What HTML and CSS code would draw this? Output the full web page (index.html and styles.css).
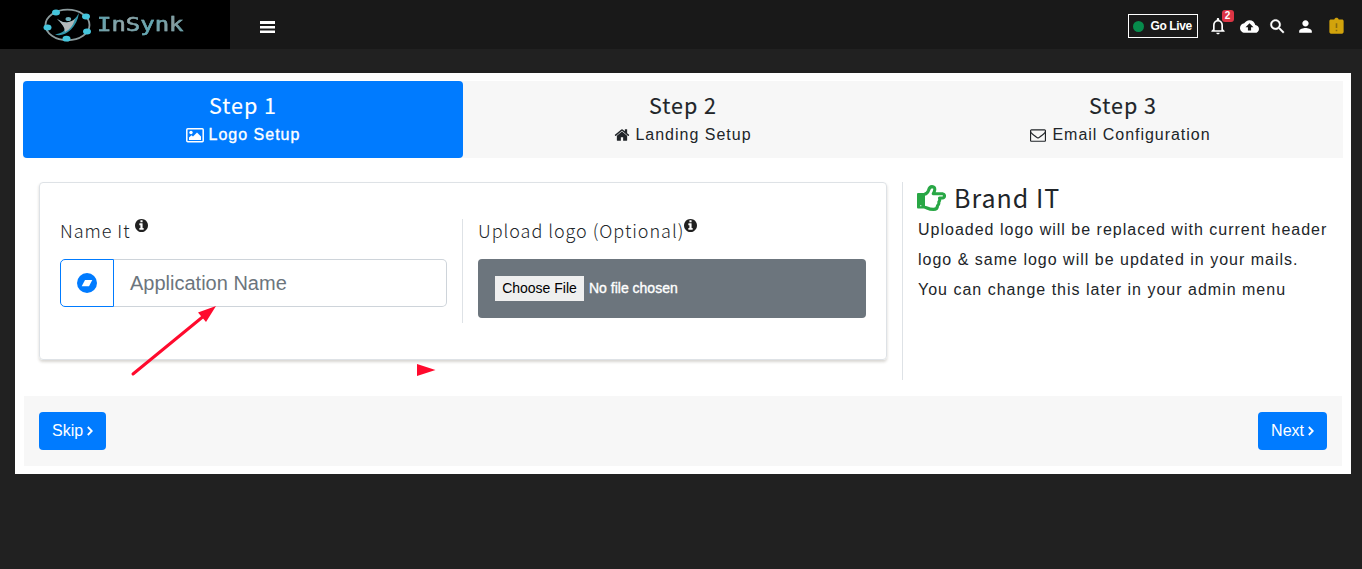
FILE: index.html
```html
<!DOCTYPE html>
<html lang="en">
<head>
<meta charset="utf-8">
<title>InSynk</title>
<link rel="stylesheet" href="styles.css">
</head>
<body>
<header class="topbar">
  <div class="brand">
    <svg class="brand-mark" width="50" height="36" viewBox="0 0 50 36">
      <ellipse cx="24.500" cy="18" rx="22" ry="15.300" fill="none" stroke="#8b9a9c" stroke-width="1.800"/>
      <path d="M14 11.500Q19 16 24 15.500Q31 15 36 6Q34.500 16 28 22.500Q20 30 12 27.500Q21 26 22 21.500Q19 16 14 11.500Z" fill="#3397aa"/>
      <path d="M14 12Q19 15.500 24 15.500Q29 15 32 12Q29 22 22 25Q22 19 14 12Z" fill="#b4b9ba"/>
      <ellipse cx="25.300" cy="12" rx="2.800" ry="2.100" fill="#68aeba"/>
      <g fill="#45c5dc"><ellipse cx="13" cy="5.500" rx="4" ry="2.900"/><ellipse cx="43" cy="9.500" rx="4" ry="3"/><ellipse cx="4.500" cy="20.500" rx="4" ry="2.900"/><ellipse cx="44" cy="24.500" rx="4" ry="2.900"/><ellipse cx="23.500" cy="31.700" rx="4" ry="2.900"/></g>
    </svg>
    <span class="brand-name">InSynk</span>
  </div>
  <svg class="burger" width="15" height="13" viewBox="0 0 15 13"><path d="M0 0h15v3H0zM0 5h15v2.500H0zM0 9.500h15v2.500H0z" fill="#fff"/></svg>
  <div class="tools">
    <div class="live"><i class="dot"></i>Go Live</div>
    <div class="bell">
      <svg width="20" height="20" viewBox="0 0 24 24" fill="#fff"><path d="M12 22c1.100 0 2-.9 2-2h-4c0 1.100.89 2 2 2zm6-6v-5c0-3.070-1.640-5.640-4.500-6.320V4c0-.83-.67-1.500-1.500-1.500s-1.500.67-1.500 1.500v.68C7.630 5.360 6 7.920 6 11v5l-2 2v1h16v-1l-2-2zm-2 1H8v-6c0-2.480 1.510-4.500 4-4.500s4 2.020 4 4.500v6z"/></svg>
      <b class="badge">2</b>
    </div>
    <svg class="cloud" width="19" height="19" viewBox="0 0 24 24" fill="#fff"><path d="M19.350 10.040C18.670 6.590 15.640 4 12 4 9.110 4 6.600 5.640 5.350 8.040 2.340 8.360 0 10.910 0 14c0 3.310 2.690 6 6 6h13c2.760 0 5-2.240 5-5 0-2.640-2.050-4.780-4.650-4.960zM14 13v4h-4v-4H7l5-5 5 5h-3z"/></svg>
    <svg class="search" width="19" height="19" viewBox="0 0 24 24" fill="#fff" stroke="#fff" stroke-width=".5"><path d="M15.500 14h-.79l-.28-.27C15.410 12.590 16 11.110 16 9.500 16 5.910 13.090 3 9.500 3S3 5.910 3 9.500 5.910 16 9.500 16c1.610 0 3.090-.59 4.230-1.570l.27.28v.79l5 4.990L20.490 19l-4.990-5zm-6 0C7.010 14 5 11.990 5 9.500S7.010 5 9.500 5 14 7.010 14 9.500 11.990 14 9.500 14z"/></svg>
    <svg class="person" width="19" height="19" viewBox="0 0 24 24" fill="#fff"><path d="M12 12c2.210 0 4-1.790 4-4s-1.790-4-4-4-4 1.790-4 4 1.790 4 4 4zm0 2c-2.670 0-8 1.340-8 4v2h16v-2c0-2.660-5.330-4-8-4z"/></svg>
    <svg class="clip" width="19" height="19" viewBox="0 0 24 24" fill="#d2a30b"><path d="M10 7h4v12h-4z" fill="#8a6c10"/><path d="M19 3h-4.180C14.400 1.840 13.300 1 12 1c-1.300 0-2.400.84-2.820 2H5c-1.100 0-2 .9-2 2v14c0 1.100.9 2 2 2h14c1.100 0 2-.9 2-2V5c0-1.100-.9-2-2-2zm-6 15h-2v-2h2v2zm0-4h-2V8h2v6z"/></svg>
  </div>
</header>

<main class="wizard">
  <nav class="steps">
    <div class="step active">
      <h2>Step 1</h2>
      <p><svg width="18" height="15" viewBox="0 0 18 15"><rect x=".8" y=".8" width="16.400" height="12.900" rx="1" fill="none" stroke="#fff" stroke-width="1.500"/><circle cx="5" cy="4.500" r="1.700" fill="#fff"/><path d="M3 12V9.500L5.500 7.200 7 8.500 11 4.500 15 8.500V12Z" fill="#fff"/></svg>Logo Setup</p>
    </div>
    <div class="step">
      <h2>Step 2</h2>
      <p><svg width="16" height="16" viewBox="0 0 1792 1792" fill="#212529"><path d="M1472 992v480q0 26-19 45t-45 19h-384v-384h-256v384h-384q-26 0-45-19t-19-45v-480q0-1 .5-3t.5-3l575-474 575 474q1 2 1 6zm223-69l-62 74q-8 9-21 11h-3q-13 0-21-7l-692-577-692 577q-12 8-24 7-13-2-21-11l-62-74q-8-10-7-23.500t11-21.500l719-599q32-26 76-26t76 26l244 204v-195q0-14 9-23t23-9h192q14 0 23 9t9 23v408l219 182q10 8 11 21.500t-7 23.500z"/></svg>Landing Setup</p>
    </div>
    <div class="step email-step">
      <h2>Step 3</h2>
      <p><svg width="16" height="16" viewBox="0 0 1792 1792" fill="#212529"><path d="M1664 1504v-768q-32 36-69 66-268 206-426 338-51 43-83 67t-86.500 48.500-102.500 24.500h-2q-48 0-102.500-24.500t-86.500-48.500-83-67q-158-132-426-338-37-30-69-66v768q0 13 9.500 22.500t22.500 9.500h1472q13 0 22.500-9.500t9.500-22.500zm0-1051v-24.500l-.5-13-3-12.500-5.500-9-9-7.500-14-2.500h-1472q-13 0-22.500 9.500t-9.500 22.500q0 168 147 284 193 152 401 317 6 5 35 29.500t46 37.500 44.500 31.500 50.500 27.500 43 9h2q20 0 43-9t50.500-27.500 44.500-31.500 46-37.500 35-29.500q208-165 401-317 54-43 100.500-115.500t46.500-131.500zm128-37v1088q0 66-47 113t-113 47h-1472q-66 0-113-47t-47-113v-1088q0-66 47-113t113-47h1472q66 0 113 47t47 113z"/></svg>Email Configuration</p>
    </div>
  </nav>

  <div class="content">
    <section class="card">
      <div class="field name-field">
        <label>Name It <svg class="info" width="13" height="13" viewBox="128 128 1536 1536"><path d="M1152 1376v-160q0-14-9-23t-23-9h-96v-512q0-14-9-23t-23-9h-320q-14 0-23 9t-9 23v160q0 14 9 23t23 9h96v320h-96q-14 0-23 9t-9 23v160q0 14 9 23t23 9h448q14 0 23-9t9-23zm-128-896v-160q0-14-9-23t-23-9h-192q-14 0-23 9t-9 23v160q0 14 9 23t23 9h192q14 0 23-9t9-23zm640 416q0 209-103 385.500t-279.500 279.500-385.500 103-385.500-103-279.500-279.500-103-385.500 103-385.500 279.500-279.500 385.500-103 385.500 103 279.500 279.500 103 385.500z"/></svg></label>
        <div class="input-group">
          <span class="addon"><svg width="20" height="20" viewBox="0 0 20 20"><circle cx="10" cy="10" r="10" fill="#007bff"/><path d="M8 7h7.300L12 13.200H4.700Z" fill="#fff"/></svg></span>
          <div class="input">Application Name</div>
        </div>
      </div>
      <div class="field upload-field">
        <label>Upload logo (Optional)<svg class="info" width="13" height="13" viewBox="128 128 1536 1536"><path d="M1152 1376v-160q0-14-9-23t-23-9h-96v-512q0-14-9-23t-23-9h-320q-14 0-23 9t-9 23v160q0 14 9 23t23 9h96v320h-96q-14 0-23 9t-9 23v160q0 14 9 23t23 9h448q14 0 23-9t9-23zm-128-896v-160q0-14-9-23t-23-9h-192q-14 0-23 9t-9 23v160q0 14 9 23t23 9h192q14 0 23-9t9-23zm640 416q0 209-103 385.500t-279.500 279.500-385.500 103-385.500-103-279.500-279.500-103-385.500 103-385.500 279.500-279.500 385.500-103 385.500 103 279.500 279.500 103 385.500z"/></svg></label>
        <div class="upload"><span class="choose">Choose File</span><span class="nofile">No file chosen</span></div>
      </div>
    </section>
    <aside class="help">
      <h1><svg width="29" height="26" viewBox="0 0 29 26"><path d="M1 8h7v15.500H1Q0 23.500 0 22.500V9Q0 8 1 8Z" fill="#28a745"/><path d="M7.500 9.300Q10.500 8.500 11.500 5.500Q12.500 1.600 15 1.600Q18.200 1.700 17.700 5Q17.400 7 16.300 8.700H25.500Q27.500 9 27.500 10.800Q27.500 12.800 25.500 13H22.500Q23.300 15.200 21.800 17Q22.300 19.300 20.500 20.700Q20.500 24.400 16.500 24.400Q13 24.400 10 23Q8.500 22.300 7.500 22.300" fill="none" stroke="#28a745" stroke-width="3.100" stroke-linejoin="round"/><circle cx="3.800" cy="20.700" r=".6" fill="#fff"/></svg><span>Brand IT</span></h1>
      <p>Uploaded logo will be replaced with current header<br>logo &amp; same logo will be updated in your mails.<br>You can change this later in your admin menu</p>
    </aside>
  </div>

  <footer class="actions">
    <div class="btn">Skip <svg width="6" height="10" viewBox="0 0 6 10"><path d="M.8 1L4.800 5 .8 9" fill="none" stroke="#fff" stroke-width="1.800"/></svg></div>
    <div class="btn">Next <svg width="6" height="10" viewBox="0 0 6 10"><path d="M.8 1L4.800 5 .8 9" fill="none" stroke="#fff" stroke-width="1.800"/></svg></div>
  </footer>
</main>

<svg class="annotations" width="1362" height="569" viewBox="0 0 1362 569">
  <path d="M133 374L205 315" stroke="#ff0a2d" stroke-width="3" stroke-linecap="round"/>
  <path d="M216 306L198 312.500 206 322ZM417 364L435.500 370 417 376Z" fill="#ff0a2d"/>
</svg>
</body>
</html>
```
FILE: styles.css
```css
* { box-sizing: border-box; }
body { margin: 0; min-height: 569px; background: #212121; color: #212529; font: 16px/24px "Liberation Sans", Arial, sans-serif; overflow: hidden; }
h1, h2, p { margin: 0; }
svg { display: block; flex: none; }

.topbar { display: flex; height: 49px; background: #191919; }
.brand { display: flex; width: 230px; background: #000; padding: 7px 0 0 43px; }
.brand-name { margin-left: 4px; font: 19px/34px "DejaVu Sans Mono", monospace; height: 34px; transform: scaleX(1.26); transform-origin: left; background: linear-gradient(115deg, #3f9fb0, #9aa5a7 35%, #5fa9b6 60%, #8b9a9c 80%, #4fa5b4); background-clip: text; -webkit-background-clip: text; color: transparent; -webkit-text-stroke: .5px rgba(120, 165, 172, .6); }
.burger { margin: 21px 0 0 30px; }
.tools { display: flex; align-items: center; margin-left: auto; padding: 3px 16.5px 0 0; }
.live { display: flex; align-items: center; width: 70px; height: 24px; border: 1px solid #fff; color: #fff; font-size: 12px; font-weight: 700; letter-spacing: -.4px; white-space: nowrap; }
.dot { width: 11px; height: 11px; border-radius: 50%; background: #078b4c; margin: 0 7px 0 4px; }
.bell { position: relative; margin-left: 10px; }
.badge { position: absolute; left: 14px; top: -6px; width: 12px; height: 12px; border-radius: 3px; background: #dc3545; color: #fff; font-size: 10px; line-height: 12px; text-align: center; }
.cloud { margin-left: 12px; }
.search { margin-left: 9px; }
.person { margin-left: 9px; }
.clip { margin-left: 12px; }

.wizard { margin: 24px 11px 0 15px; height: 401px; padding: 8px; background: #fff; }
.steps { display: flex; height: 77px; background: #f7f7f7; }
.step { flex: 1; padding-top: 9px; text-align: center; letter-spacing: 1px; border-radius: 4px; }
.step h2 { font: 400 21.500px/30px "Noto Sans CJK SC", sans-serif; letter-spacing: 1px; height: 32px; -webkit-text-stroke: .15px currentColor; }
.step p { display: flex; justify-content: center; align-items: center; gap: 5px; line-height: 26px; height: 26px; }
.email-step p { gap: 6px; padding-right: 5px; letter-spacing: .97px; }
.active { background: #007bff; color: #fff; }
.active p { -webkit-text-stroke: .35px #fff; }

.content { display: flex; padding: 24px 16px 0; height: 238px; }
.card { display: flex; width: 848px; height: 178px; padding: 36px 20px; border: 1px solid #dee2e6; border-radius: 4px; box-shadow: 0 2px 3px rgba(60, 50, 30, .2); }
.name-field { width: 403px; padding-right: 15px; border-right: 1px solid #dee2e6; }
.upload-field { width: 403px; padding-left: 15px; }
.field { height: 104px; }
.field label { display: flex; height: 40px; font: 200 18px/22px "Noto Sans CJK SC", sans-serif; letter-spacing: .96px; white-space: pre; }
.info { fill: #212121; }
.input-group { display: flex; height: 48px; }
.addon { display: flex; width: 54px; align-items: center; justify-content: center; border: 1px solid #007bff; border-radius: 5px 0 0 5px; }
.input { flex: 1; border: 1px solid #ced4da; border-left: 0; border-radius: 0 5px 5px 0; padding-left: 16px; color: #6c757d; font-size: 20px; line-height: 46px; }
.upload { display: flex; align-items: center; height: 59px; padding-left: 17px; border-radius: 4px; background: #6c757d; font-size: 14px; }
.choose { width: 89px; height: 25px; line-height: 24px; text-align: center; background: #efefef; color: #000; }
.nofile { color: #fff; height: 25px; line-height: 24px; margin-left: 5px; -webkit-text-stroke: .35px #fff; }

.help { height: 198px; margin-left: 15px; padding-left: 15px; border-left: 1px solid #dee2e6; white-space: nowrap; }
.help h1 { display: flex; align-items: center; gap: 8px; margin-left: -1px; font: 400 25px/32px "Noto Sans CJK SC", sans-serif; height: 32px; letter-spacing: 1px; }
.help h1 span { padding-bottom: 2px; }
.help p { padding-top: 1px; line-height: 30px; letter-spacing: 1px; }

.actions { display: flex; justify-content: space-between; height: 70px; margin: 0 1px; padding: 16px 15px; background: #f7f7f7; }
.btn { display: flex; align-items: center; gap: 4px; height: 38px; padding: 0 13px; border-radius: 4px; background: #007bff; color: #fff; }

.annotations { position: absolute; left: 0; top: 0; pointer-events: none; }
```
